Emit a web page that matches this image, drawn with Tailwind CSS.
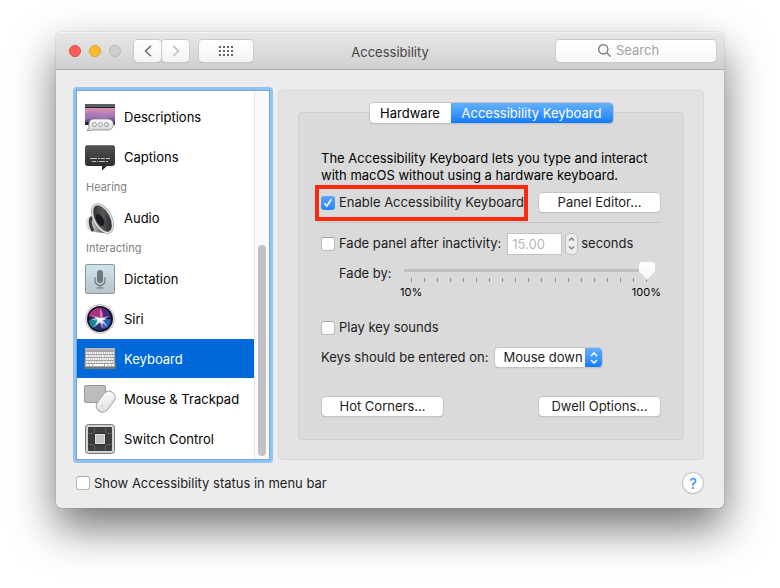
<!DOCTYPE html>
<html lang="en">
  <head>
    <meta charset="UTF-8" />
    <meta name="viewport" content="width=device-width, initial-scale=1.0" />
    <script src="https://cdn.jsdelivr.net/npm/@tailwindcss/browser@4"></script>
    <title>Accessibility</title>
  </head>

  <body class="bg-white px-14 pt-8 pb-20 font-['Inter','Liberation_Sans',sans-serif] text-[13px] leading-[17px] text-[#1c1c1c]">
    <div class="rounded-[5px] bg-[#ececec] shadow-[0_0_1px_rgba(0,0,0,0.6),0_20px_44px_rgba(0,0,0,0.55)]">
      <!-- Title bar -->
      <header
        class="grid h-[38px] grid-cols-[1fr_auto_1fr] items-center rounded-t-[5px] border-b border-[#a9a9a9] bg-linear-to-b from-[#e8e8e8] to-[#d0d0d0] px-2 shadow-[inset_0_1px_0_#f4f4f4]"
      >
        <div class="flex items-center pl-[5px]">
          <div class="flex gap-2">
            <button aria-label="Close" class="size-3 rounded-full border border-[#e2463f] bg-[#fc605b]"></button>
            <button aria-label="Minimize" class="size-3 rounded-full border border-[#e0a028] bg-[#fdbc2e]"></button>
            <button aria-label="Zoom" disabled class="size-3 rounded-full border border-[#b8b8b8] bg-[#cfcfcf]"></button>
          </div>
          <div class="ml-[13px] flex gap-px">
            <button
              aria-label="Back"
              class="flex h-[22px] w-[27px] items-center justify-center rounded-[4px] bg-linear-to-b from-white to-[#f3f3f3] shadow-[0_0_0_1px_#cacaca,0_1px_1px_#9a9a9a]"
            >
              <svg class="h-3 w-2" viewBox="0 0 8 12" fill="none" stroke="#6a6a6a" stroke-width="1.5"><path d="M7 .7 1.5 6 7 11.3" /></svg>
            </button>
            <button
              aria-label="Forward"
              disabled
              class="flex h-[22px] w-[27px] items-center justify-center rounded-[4px] bg-linear-to-b from-white to-[#f3f3f3] shadow-[0_0_0_1px_#cacaca,0_1px_1px_#9a9a9a]"
            >
              <svg class="h-3 w-2" viewBox="0 0 8 12" fill="none" stroke="#bcbcbc" stroke-width="1.5"><path d="M1 .7 6.500 6 1 11.3" /></svg>
            </button>
          </div>
          <button
            aria-label="Show All"
            class="ml-[10px] flex h-[22px] w-[54px] items-center justify-center rounded-[4px] bg-linear-to-b from-white to-[#f3f3f3] shadow-[0_0_0_1px_#cacaca,0_1px_1px_#9a9a9a]"
          >
            <svg class="h-[10px] w-[14px]" viewBox="0 0 14 10" stroke="#636363" stroke-width="2" stroke-dasharray="2 2">
              <path d="M0 1h14M0 5h14M0 9h14" />
            </svg>
          </button>
        </div>
        <h1 class="pt-[3px] text-[#454545]">Accessibility</h1>
        <label
          class="flex h-[22px] w-[160px] items-center justify-self-end rounded-[4px] bg-linear-to-b from-white to-[#f7f7f7] pl-[42px] shadow-[0_0_0_1px_#cacaca,0_1px_1px_#9a9a9a]"
        >
          <svg class="size-[13px] shrink-0" viewBox="0 0 13 13" fill="none" stroke="#6b6b6b" stroke-width="1.2">
            <circle cx="5.300" cy="5.300" r="4.600" />
            <path d="m8.600 8.600 4 4" />
          </svg>
          <input type="text" aria-label="Search" placeholder="Search" class="ml-[5px] w-[90px] outline-none placeholder:text-[#a3a3a3]" />
        </label>
      </header>

      <main class="flex gap-[5px] pt-[17px] pr-5 pl-[17px]">
        <!-- Sidebar -->
        <nav class="w-[200px] shrink-0 rounded-[4px] border-[3px] border-[#93c1f2]">
          <div class="flex h-full border border-[#72a7e3] bg-white">
            <ul class="flex-1 pt-[6px] text-black">
              <li>
                <a href="#" class="flex h-10 items-center gap-2 pl-[7px]">
                  <svg class="size-8" viewBox="0 0 32 32">
                    <defs>
                      <linearGradient id="sunset" x2="0" y2="1"><stop offset="0" stop-color="#d391b4" /><stop offset=".4" stop-color="#c383b5" /><stop offset="1" stop-color="#544c9c" /></linearGradient>
                      <linearGradient id="bubble" x2="0" y2="1"><stop stop-color="#fff" /><stop offset="1" stop-color="#d2d4d8" /></linearGradient>
                    </defs>
                    <path d="M1 3h30v21H1z" fill="#25252b" />
                    <path d="M1 3h30v3H1z" fill="#5c5f61" />
                    <path d="M1 7h30v14H1z" fill="url(#sunset)" />
                    <path d="M1 12l9-2 8 3 13-3v5l-12 3-8-2-10 3z" fill="#ac79b9" opacity=".7" />
                    <path d="M10 18h14a5.500 5.500 0 0 1 0 11H9q-3 1-6 .5Q6 27 4.800 23.500 5 18 10 18z" fill="url(#bubble)" stroke="#85878b" stroke-width=".8" />
                    <g fill="#f4f4f4" stroke="#8b8e94" stroke-width=".9"><circle cx="10.500" cy="23.500" r="2" /><circle cx="16.500" cy="23.500" r="2" /><circle cx="22.500" cy="23.500" r="2" /></g>
                  </svg>
                  Descriptions
                </a>
              </li>
              <li>
                <a href="#" class="flex h-10 items-center gap-2 pl-[7px]">
                  <svg class="size-8" viewBox="0 0 32 32">
                    <defs>
                      <linearGradient id="caption" x2="0" y2="1"><stop stop-color="#505254" /><stop offset="1" stop-color="#252628" /></linearGradient>
                    </defs>
                    <path d="M4 4h24q3 0 3 3v15q0 3-3 3h-5l-5 4.500v-4.500H4q-3 0-3-3V7q0-3 3-3z" fill="url(#caption)" />
                    <path d="M3 4.500h26" stroke="#77797b" stroke-width=".8" />
                    <g stroke="#c4c4c4"><path d="M6 17.500h20" stroke-dasharray="7 1 2 1 4 1" /><path d="M8 20.500h16" stroke-dasharray="4 1 1 1 6 1" /></g>
                  </svg>
                  Captions
                </a>
              </li>
              <li class="h-[21px] pl-[9px] text-[11px] leading-[21px] text-[#808080]">Hearing</li>
              <li>
                <a href="#" class="flex h-10 items-center gap-2 pl-[7px]">
                  <svg class="size-8" viewBox="0 0 32 32">
                    <defs>
                      <linearGradient id="magnet"><stop stop-color="#eee" /><stop offset=".5" stop-color="#aaa" /><stop offset="1" stop-color="#333" /></linearGradient>
                      <linearGradient id="cone" x2="1" y2="1"><stop stop-color="#202122" /><stop offset=".5" stop-color="#55585b" /><stop offset="1" stop-color="#131415" /></linearGradient>
                    </defs>
                    <path d="M8 14 3 16q-3 5 0 11l6 3 12 1L9 5z" fill="url(#magnet)" />
                    <path d="M8 15q-4 4 1 14" fill="none" stroke="#3c3d3e" stroke-width="3" />
                    <ellipse cx="18.500" cy="16.500" rx="8.300" ry="15.300" transform="rotate(-28 18.500 16.500)" fill="url(#cone)" stroke="#8b8d8e" stroke-width="2.400" />
                    <ellipse cx="18.500" cy="16.500" rx="8.300" ry="15.300" transform="rotate(-28 18.500 16.500)" fill="none" stroke="#e6e6e6" stroke-width="1.300" />
                    <ellipse cx="16" cy="18" rx="3.500" ry="6.500" transform="rotate(-28 16 18)" fill="#191a1c" />
                  </svg>
                  Audio
                </a>
              </li>
              <li class="h-[21px] pl-[9px] text-[11px] leading-[21px] text-[#808080]">Interacting</li>
              <li>
                <a href="#" class="flex h-10 items-center gap-2 pl-[7px]">
                  <svg class="size-8" viewBox="0 0 32 32">
                    <defs>
                      <linearGradient id="dictation" x2="0" y2="1"><stop stop-color="#d0e4ee" /><stop offset="1" stop-color="#b7c3c8" /></linearGradient>
                    </defs>
                    <rect x="1.500" y="1.500" width="29" height="29" rx="1.500" fill="url(#dictation)" stroke="#8a969b" />
                    <rect x="13" y="7" width="6" height="13" rx="3" fill="#6e797e" />
                    <path d="M11 14v3.500a5 5 0 0 0 10 0V14M16 22.500V25M12.500 25h7" fill="none" stroke="#6e797e" stroke-width="1.200" />
                  </svg>
                  Dictation
                </a>
              </li>
              <li>
                <a href="#" class="flex h-10 items-center gap-2 pl-[7px]">
                  <svg class="size-8" viewBox="0 0 32 32">
                    <circle cx="16" cy="16" r="14.400" fill="#f3f3f3" stroke="#b9b9b9" />
                    <circle cx="16" cy="16" r="13" fill="#12132d" />
                    <path d="M6 10q5-6 12-5l4 2-3 9-3 1-9-3-2-1z" fill="#a8327f" />
                    <path d="M18 5q7 1 9 9l-8 3z" fill="#4a2a72" />
                    <path d="M5 17l10-2 1 4-7 6q-4-3-4-8z" fill="#1d8192" />
                    <path d="M16 17l11-1q-1 8-7 10l-3-2z" fill="#2f5db5" />
                    <path d="M9 25l7-7 2 9q-5 1-9-2z" fill="#243270" />
                    <path d="M16 6q4 4 2 9l1 11q-4-5-3-10z" fill="#ee6fb5" />
                    <path d="M6 11l10 4 9-2-6 4 5 7-7-5-8 6 5-7-8-2 8-1z" fill="#9fd8f3" opacity=".9" />
                    <path d="M10 14l6 1 7 1-5 1.500 1 4-3-3-5 3 3.500-4.500z" fill="#fff" />
                  </svg>
                  Siri
                </a>
              </li>
              <li class="border-b border-white bg-[#0069d9]">
                <a href="#" aria-current="page" class="-mb-px flex h-10 items-center gap-2 pl-[7px] text-white">
                  <svg class="size-8" viewBox="0 0 32 32">
                    <path d="M1 5h30l1 19-1 2H1l-1-2z" fill="#777" />
                    <path d="M1 5h30v2H1z" fill="#b7b7b7" />
                    <path d="M1 7h30v17H1z" fill="#a2a2a2" />
                    <g stroke="#f5f5f5" stroke-width="2">
                      <path d="M2 10h28" stroke-dasharray="1.600 .6" />
                      <path d="M2 13h28" stroke-dasharray="2.500 .6 1.600 .6" />
                      <path d="M2 16h28" stroke-dasharray="1.700 .6" />
                      <path d="M2 19h28" stroke-dasharray="2.600 .6 1.600 .6" />
                      <path d="M2 22h6.500M21 22h9" stroke-dasharray="2.800 .6" />
                      <path d="M9 22h11" />
                    </g>
                  </svg>
                  Keyboard
                </a>
              </li>
              <li>
                <a href="#" class="flex h-10 items-center gap-2 pl-[7px]">
                  <svg class="size-8" viewBox="0 0 32 32">
                    <defs>
                      <linearGradient id="mouse" x2="1" y2="1"><stop stop-color="#fff" /><stop offset="1" stop-color="#dcdcdc" /></linearGradient>
                    </defs>
                    <rect x=".5" y="2.500" width="21" height="17" rx="1" fill="#bcbcbc" stroke="#999" />
                    <rect x="15.500" y="7" width="12.500" height="23" rx="6" transform="rotate(37 21.500 18.500)" fill="url(#mouse)" stroke="#a5a5a5" />
                    <circle cx="18" cy="23" r="1.300" fill="#d5d5d5" />
                  </svg>
                  Mouse &amp; Trackpad
                </a>
              </li>
              <li>
                <a href="#" class="flex h-10 items-center gap-2 pl-[7px]">
                  <svg class="size-8" viewBox="0 0 32 32">
                    <rect x="1.500" y="1.500" width="29" height="29" rx="3" fill="#d5d5d5" stroke="#777" />
                    <rect x="4" y="4" width="24" height="24" rx="1" fill="#3c3e40" />
                    <path d="M4 10.500h24M4 21.500h24M10.500 4v24M21.500 4v24" stroke="#5c5d5f" />
                    <rect x="10" y="10" width="12" height="12" fill="#2e2f31" />
                    <rect x="11.500" y="11.500" width="9" height="9" fill="#c4c4c4" stroke="#e0e0e0" />
                  </svg>
                  Switch Control
                </a>
              </li>
            </ul>
            <div class="flex w-[15px] flex-col items-center justify-end border-l border-[#e8e8e8] bg-[#fafafa] pb-[3px]">
              <div class="h-[211px] w-2 rounded-full bg-[#c1c1c1]"></div>
            </div>
          </div>
        </nav>

        <!-- Settings -->
        <section class="my-[3px] flex-1 rounded-[4px] border border-[#d8d8d8] bg-[#e3e3e3] px-[19px] pt-[21px] pb-[19px]">
          <form class="h-full rounded-[4px] border border-[#d0d0d0] bg-[#dadada] px-[22px]">
            <div class="-mt-[10px] flex justify-center">
              <div class="flex h-5 rounded-[4px] shadow-[0_0_0_1px_#c2c2c2,0_1px_1px_#909090]">
                <button type="button" class="w-[81px] rounded-l-[4px] bg-white text-black">Hardware</button>
                <button type="button" class="w-[162px] rounded-r-[4px] bg-linear-to-b from-[#64b1fb] to-[#0d7bfd] text-white">Accessibility Keyboard</button>
              </div>
            </div>

            <p class="mt-[27px] text-black">
              The Accessibility Keyboard lets you type and interact<br />
              with macOS without using a hardware keyboard.
            </p>

            <div class="relative mt-2 flex h-[21px] items-center justify-between pr-px">
              <div class="flex items-center gap-1">
                <input
                  id="enable"
                  type="checkbox"
                  checked
                  class="size-[14px] appearance-none rounded-[3px] bg-linear-to-b from-[#57a7fb] to-[#2183fb]"
                />
                <svg class="pointer-events-none absolute left-0 size-[14px]" viewBox="0 0 14 14" fill="none" stroke="#fff" stroke-width="1.600"><path d="m3.500 7.300 2.300 2.900 4.500-6.900" /></svg>
                <label for="enable">Enable Accessibility Keyboard</label>
              </div>
              <button type="button" class="h-[19px] w-[121px] rounded-[4px] bg-white shadow-[0_0_0_1px_#c6c6c6,0_1px_1px_#8c8c8c]">Panel Editor...</button>
              <div class="pointer-events-none absolute -top-[7px] -left-[6px] h-9 w-[213px] border-4 border-[#fc2a0d]"></div>
            </div>

            <hr class="mt-[9px] border-[#c3c3c3]" />

            <div class="mt-[9px] flex h-[23px] items-center">
              <input id="fade" type="checkbox" class="size-[14px] appearance-none rounded-[3px] border border-[#b9b9b9] border-t-[#a5a5a5] bg-white" />
              <label for="fade" class="ml-1">Fade panel after inactivity:</label>
              <input
                type="text"
                value="15.00"
                disabled
                aria-label="Seconds of inactivity"
                class="ml-[6px] h-[22px] w-[55px] border border-[#c2c2c2] bg-white px-1 text-[#b9b9b9]"
              />
              <button type="button" aria-label="Change seconds" class="ml-[3px] flex h-[22px] w-[13px] items-center justify-center rounded-[5px] border border-[#bdbdbd] bg-[#ededed]">
                <svg class="h-[13px] w-[7px]" viewBox="0 0 7 13" fill="none" stroke="#777" stroke-width="1.200"><path d="m1 3.500 2.500-2.500L6 3.500M1 9.500 3.500 12 6 9.500" /></svg>
              </button>
              <span class="ml-[3px]">seconds</span>
            </div>

            <div class="mt-[7px] flex pl-[18px]">
              <label for="opacity" class="mt-[3px] w-[65px]">Fade by:</label>
              <div class="flex-1">
                <div class="relative pr-[6px]">
                  <input
                    id="opacity"
                    type="range"
                    min="10"
                    max="100"
                    step="5"
                    value="100"
                    class="relative z-10 block h-[17px] w-full appearance-none bg-transparent [&::-webkit-slider-runnable-track]:h-[3px] [&::-webkit-slider-runnable-track]:rounded-full [&::-webkit-slider-runnable-track]:bg-[#bebebe] [&::-webkit-slider-thumb]:mt-[-7px] [&::-webkit-slider-thumb]:h-[18px] [&::-webkit-slider-thumb]:w-[16px] [&::-webkit-slider-thumb]:appearance-none [&::-webkit-slider-thumb]:rounded-[3px] [&::-webkit-slider-thumb]:bg-linear-to-b [&::-webkit-slider-thumb]:from-white [&::-webkit-slider-thumb]:to-[#f4f4f4] [&::-webkit-slider-thumb]:[clip-path:polygon(0_0,100%_0,100%_52%,50%_100%,0_52%)]"
                  />
                  <div class="-mt-px flex justify-between pr-2 pl-[7px]">
                    <i class="h-1 w-px bg-[#8a8a8a]"></i><i class="h-1 w-px bg-[#8a8a8a]"></i><i class="h-1 w-px bg-[#8a8a8a]"></i><i class="h-1 w-px bg-[#8a8a8a]"></i><i class="h-1 w-px bg-[#8a8a8a]"></i>
                    <i class="h-1 w-px bg-[#8a8a8a]"></i><i class="h-1 w-px bg-[#8a8a8a]"></i><i class="h-1 w-px bg-[#8a8a8a]"></i><i class="h-1 w-px bg-[#8a8a8a]"></i><i class="h-1 w-px bg-[#8a8a8a]"></i>
                    <i class="h-1 w-px bg-[#8a8a8a]"></i><i class="h-1 w-px bg-[#8a8a8a]"></i><i class="h-1 w-px bg-[#8a8a8a]"></i><i class="h-1 w-px bg-[#8a8a8a]"></i><i class="h-1 w-px bg-[#8a8a8a]"></i>
                    <i class="h-1 w-px bg-[#8a8a8a]"></i><i class="h-1 w-px bg-[#8a8a8a]"></i><i class="h-1 w-px bg-[#8a8a8a]"></i><i class="h-1 w-px bg-[#8a8a8a]"></i>
                  </div>
                </div>
                <div class="mt-[3px] -ml-1 flex justify-between text-[11px] leading-[14px] text-black">
                  <span>10%</span>
                  <span>100%</span>
                </div>
              </div>
            </div>

            <div class="mt-5 flex items-center gap-1">
              <input id="sounds" type="checkbox" class="size-[14px] appearance-none rounded-[3px] border border-[#b9b9b9] border-t-[#a5a5a5] bg-white" />
              <label for="sounds">Play key sounds</label>
            </div>

            <div class="mt-3 flex items-center gap-[7px]">
              <label for="entered">Keys should be entered on:</label>
              <div class="relative">
                <select id="entered" class="block h-[19px] w-[107px] appearance-none rounded-[4px] bg-white pl-2 shadow-[0_0_0_1px_#c6c6c6,0_1px_1px_#8c8c8c]">
                  <option>Mouse down</option>
                </select>
                <div class="pointer-events-none absolute inset-y-0 right-0 flex w-[17px] items-center justify-center rounded-r-[4px] bg-linear-to-b from-[#64b1fb] to-[#0d7bfd]">
                  <svg class="h-3 w-2" viewBox="0 0 8 12" fill="none" stroke="#fff" stroke-width="1.500"><path d="m1 4 3-3 3 3M1 8l3 3 3-3" /></svg>
                </div>
              </div>
            </div>

            <div class="mt-[30px] flex justify-between px-px">
              <button type="button" class="h-[19px] w-[121px] rounded-[4px] bg-white shadow-[0_0_0_1px_#c6c6c6,0_1px_1px_#8c8c8c]">Hot Corners...</button>
              <button type="button" class="h-[19px] w-[121px] rounded-[4px] bg-white shadow-[0_0_0_1px_#c6c6c6,0_1px_1px_#8c8c8c]">Dwell Options...</button>
            </div>
          </form>
        </section>
      </main>

      <footer class="flex items-center justify-between pt-[10px] pr-[21px] pb-[15px] pl-5">
        <div class="flex items-center gap-1">
          <input id="status" type="checkbox" class="size-[14px] appearance-none rounded-[3px] border border-[#b9b9b9] border-t-[#a5a5a5] bg-white" />
          <label for="status">Show Accessibility status in menu bar</label>
        </div>
        <button class="size-5 rounded-full bg-white text-[15px] text-[#1a86fb] shadow-[0_0_0_1px_#c6c6c6,0_1px_1px_#8c8c8c]">?</button>
      </footer>
    </div>
  </body>
</html>
